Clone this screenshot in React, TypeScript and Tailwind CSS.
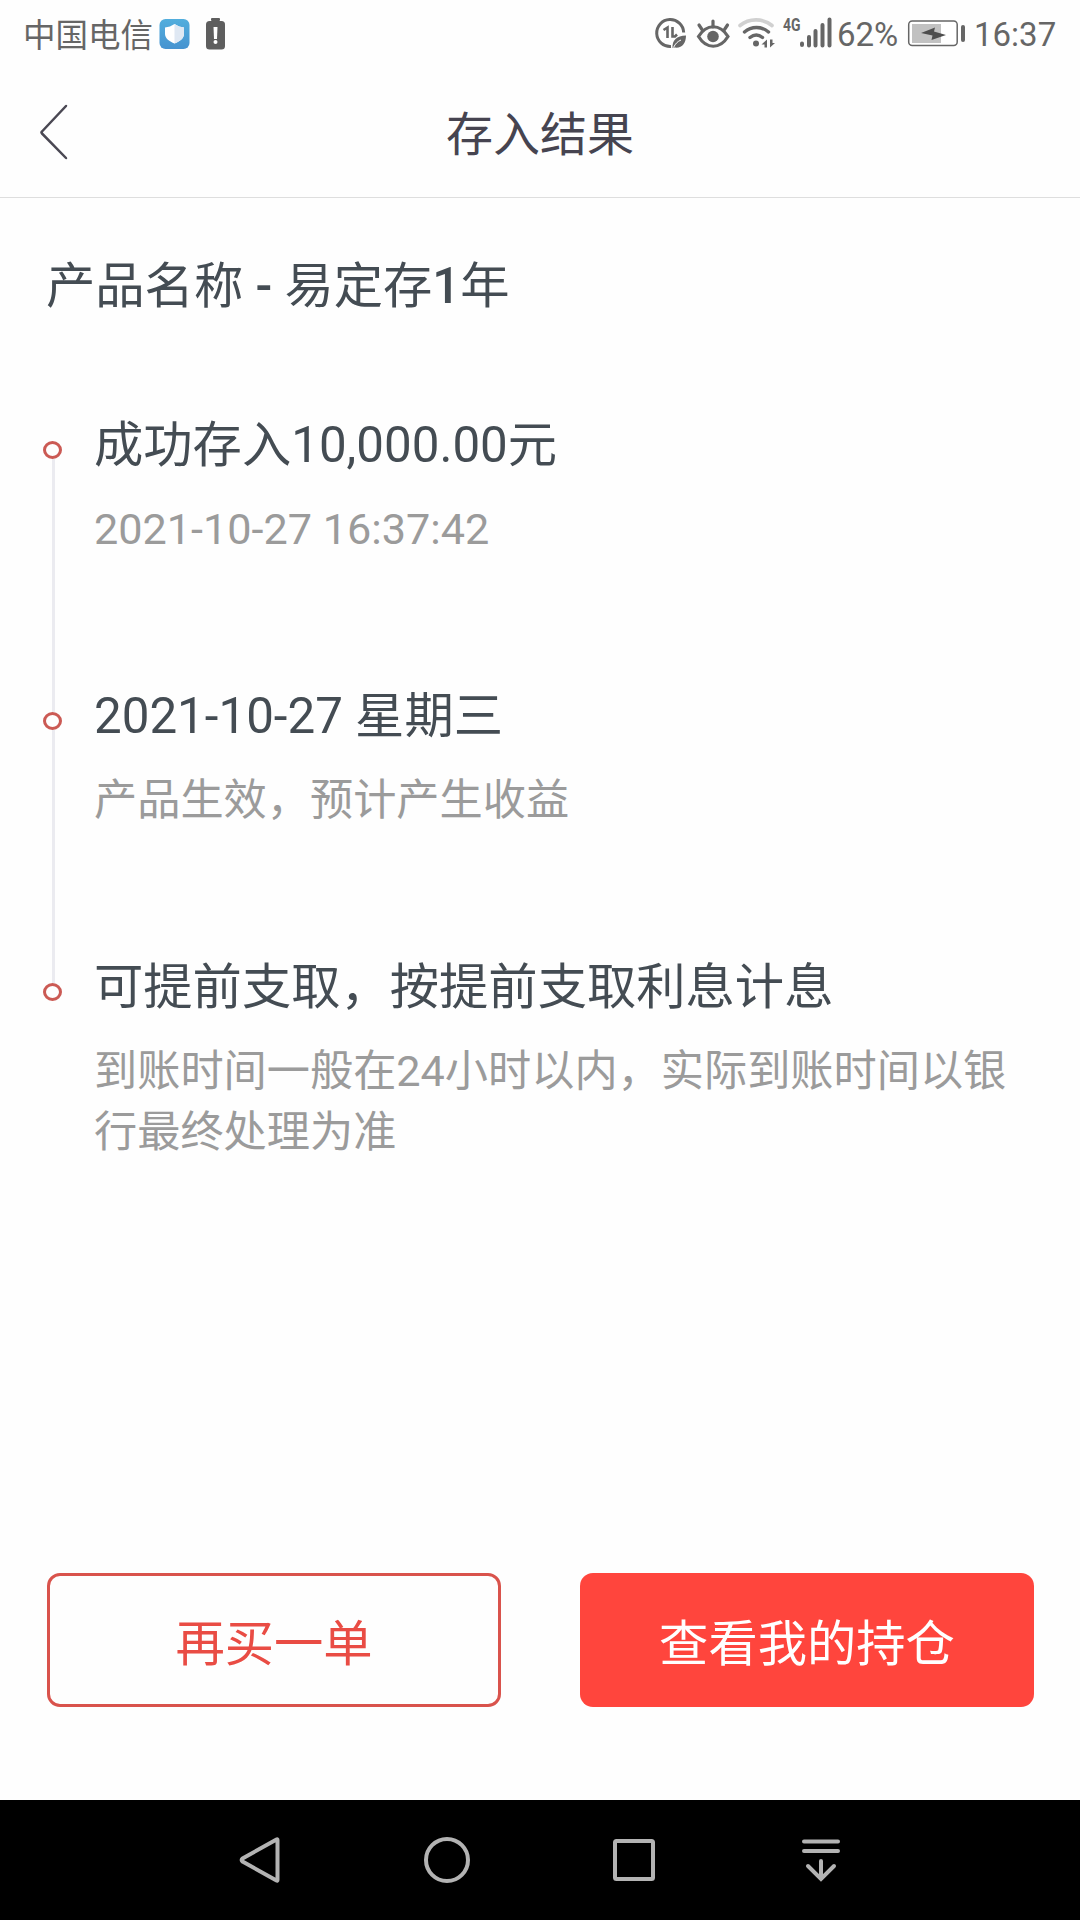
import React from "react";

interface TimelineItem {
  title: string;
  description: string;
}

const timeline: TimelineItem[] = [
  { title: "成功存入10,000.00元", description: "2021-10-27 16:37:42" },
  { title: "2021-10-27 星期三", description: "产品生效，预计产生收益" },
  {
    title: "可提前支取，按提前支取利息计息",
    description: "到账时间一般在24小时以内，实际到账时间以银行最终处理为准",
  },
];

const StatusBar: React.FC = () => {
  return (
    <div className="flex h-[70px] items-center pl-[23px] text-[33px] leading-[68px] text-[#666666]">
      <span className="w-[136px] whitespace-nowrap pt-px text-[32.5px]">中国电信</span>
      <svg width="68" height="70" viewBox="159 0 68 70" className="shrink-0">
        <defs>
          <linearGradient id="shield" x1="0" y1="0" x2="0" y2="1">
            <stop offset="0" stopColor="#52aedd" />
            <stop offset="1" stopColor="#4693d0" />
          </linearGradient>
        </defs>
        <rect x="159.5" y="19" width="30" height="30" rx="6" fill="url(#shield)" />
        <path d="M174.5 24c3 2 6 3.200 9.500 3.500v6.500c0 4.500-4.500 7.500-9.500 9.500-5-2-9.500-5-9.500-9.500v-6.500c3.500-.3 6.500-1.500 9.500-3.500z" fill="#ffffff" />
        <path d="M174.500 24c3 2 6 3.200 9.500 3.500v6.500c0 4.500-4.500 7.500-9.500 9.500z" fill="#dfe8f3" />
        <rect x="211" y="18" width="9" height="3" rx="1" fill="#5e5e5e" />
        <rect x="206" y="21" width="19" height="28.500" rx="3.500" fill="#5e5e5e" />
        <path d="M213.500 27h4l-.5 12h-3z" fill="#ffffff" />
        <circle cx="215.5" cy="42" r="2" fill="#ffffff" />
      </svg>
      <svg width="184" height="70" viewBox="650 0 184 70" className="ml-[423px] shrink-0" fill="none" stroke="#666666">
        {/* data saver */}
        <path d="M683.700 32.500A13.500 13.500 0 1 0 671 46.500" strokeWidth="3" />
        <path d="M663.500 30l4-2.500v10.500M672.500 27v9.500h2.500l2-2" strokeWidth="2.600" />
        <path d="M672.500 48c-.5-8 4-12 13.500-12.500 0 8-4 13-11.500 12z" fill="#666666" stroke="none" />
        <path d="M673.500 47.500c2-4 4-6 7.500-7.500" stroke="#ffffff" strokeWidth="1" />
        {/* eye comfort */}
        <path d="M698.500 36.500c8-13 21.500-13 29.500 0-8 13-21.500 13-29.500 0z" strokeWidth="3.200" />
        <circle cx="713" cy="36.500" r="5.800" fill="#666666" stroke="none" />
        <path d="M713 21v6M699 25l3 4.500M727.500 25l-3 4.500" strokeWidth="3.200" strokeLinecap="round" />
        {/* wifi */}
        <path d="M740 25.500c9-7.500 23-7.500 32 0" stroke="#d0d0d0" strokeWidth="3.600" strokeLinecap="round" />
        <path d="M744.500 32c7-6 17-6 24 0M750 37.500c4-3.300 8.500-3.300 12.500 0" strokeWidth="3.400" strokeLinecap="round" />
        <circle cx="756" cy="43.500" r="3" fill="#666666" stroke="none" />
        <path d="M761.500 44.500l5.500-5v8h-2.500v-3zM770 39.500v8l5-4.500h-2.500v-3.500z" fill="#666666" stroke="none" />
        <text x="783" y="31" textLength="17.500" lengthAdjust="spacingAndGlyphs" fill="#666666" stroke="none" className="text-[18px] font-bold">4G</text>
        <path d="M802 43.500v1.500M809 37v8.500M815.500 31v14.500M822.500 25v20.500M829.500 19.500v26" strokeWidth="4" strokeLinecap="round" />
      </svg>
      <span className="ml-[3px] w-[70px]">62%</span>
      <svg width="60" height="70" viewBox="906 0 60 70" className="shrink-0">
        <rect x="907.700" y="21" width="48.500" height="24.500" rx="3.500" fill="#ffffff" stroke="#666666" strokeWidth="1.500" />
        <rect x="911" y="24" width="29" height="19" fill="#c1c1c1" />
        <path d="M920 33l14-5.500-1 4 12 3.500-14.500 5 1-4.500z" fill="#4d4d4d" />
        <rect x="960" y="25" width="4" height="17" rx="2" fill="#666666" />
      </svg>
      <span className="ml-[7px]">16:37</span>
    </div>
  );
};

const Header: React.FC = () => {
  return (
    <header className="grid h-[128px] grid-cols-[1fr_auto_1fr] items-center border-b border-[#dedede]">
      <button className="pb-[2px] pl-[38px]">
        <svg width="32" height="60" viewBox="0 0 32 60" fill="none" stroke="#4a4853" strokeWidth="2.500" strokeLinecap="round" strokeLinejoin="round">
          <path d="M28 3L4 28.500q-1 1 0 2L28 55" />
        </svg>
      </button>
      <h1 className="pt-px text-[47px] leading-[127px] text-[#464450]">存入结果</h1>
    </header>
  );
};

const Timeline: React.FC = () => {
  return (
    <ul className="mt-[83px]">
      {timeline.map((item, index) => (
        <li key={item.title} className="flex h-[271px]">
          <div className="ml-[43px] flex w-[19px] shrink-0 flex-col items-center pt-[34px]">
            <div className="h-[18px] w-[19px] shrink-0 rounded-[50%] border-[3px] border-[#cb5a54]" />
            {index < timeline.length - 1 && (
              <div className="-mb-[34px] ml-[2px] w-[3px] grow bg-[#ebebf0]" />
            )}
          </div>
          <div className="ml-8 w-[915px]">
            <h2 className="text-[49.3px] leading-[76px] text-[#444c53]">{item.title}</h2>
            <p className="mt-4 text-[43.2px] leading-[61px] text-[#9b9b9b]">{item.description}</p>
          </div>
        </li>
      ))}
    </ul>
  );
};

const NavBar: React.FC = () => {
  return (
    <nav className="flex h-[120px] items-center justify-center gap-[127px] bg-black">
      <svg width="60" height="60" viewBox="0 0 60 60" fill="none" stroke="#b3b3b3" strokeWidth="4" strokeLinejoin="round">
        <path d="M12.500 28.500L46.500 9.500q1-.5 1 .500v40q0 1-1 .5L12.500 31.500q-1.500-1.500 0-3z" />
      </svg>
      <svg width="60" height="60" viewBox="0 0 60 60" fill="none" stroke="#b3b3b3" strokeWidth="4">
        <circle cx="30" cy="30" r="21" />
      </svg>
      <svg width="60" height="60" viewBox="0 0 60 60" fill="none" stroke="#b3b3b3" strokeWidth="4">
        <rect x="11" y="11" width="38" height="38" rx="1.500" />
      </svg>
      <svg width="60" height="60" viewBox="0 0 60 60" fill="none" stroke="#b3b3b3" strokeWidth="4" strokeLinecap="round">
        <path d="M13 11.500h34M13 21h34M30 31v17M17 36l13 13 13-13" />
      </svg>
    </nav>
  );
};

const App: React.FC = () => {
  return (
    <div className="flex h-[1920px] w-[1080px] flex-col overflow-hidden bg-[#fefefe] font-['Roboto','Noto_Sans_CJK_SC',sans-serif]">
      <StatusBar />
      <Header />
      <main className="flex grow flex-col">
        <h2 className="mt-[50px] pl-[46px] text-[49.3px] leading-[76px] text-[#444c53]">
          产品名称 <span className="font-medium">-</span> 易定存<span className="font-medium">1</span>年
        </h2>
        <Timeline />
        <div className="mt-auto mb-[93px] flex justify-between pr-[46px] pl-[47px] text-[49.3px]">
          <button className="h-[134px] w-[454px] rounded-[13px] border-[3px] border-[#d9534c] pt-[9px] text-[#e94c44]">
            再买一单
          </button>
          <button className="h-[134px] w-[454px] rounded-[13px] bg-[#ff453d] pt-[9px] text-white">
            查看我的持仓
          </button>
        </div>
      </main>
      <NavBar />
    </div>
  );
};

export default App;
